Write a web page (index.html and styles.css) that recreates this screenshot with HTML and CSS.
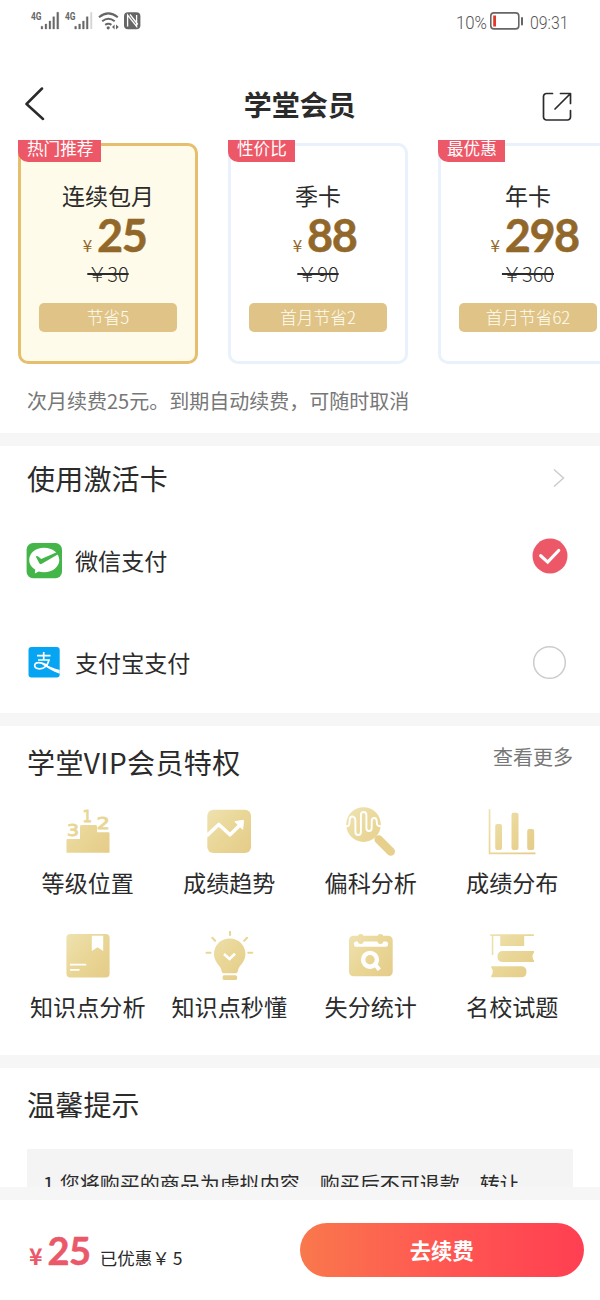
FILE: index.html
```html
<!DOCTYPE html>
<html lang="zh-CN">
<head>
<meta charset="utf-8">
<title>学堂会员</title>
<link rel="stylesheet" href="styles.css">
</head>
<body>
<div class="page">
  <div class="status">
    <svg class="status-left" width="114" height="24" viewBox="0 0 114 24" fill="#666">
      <text x="1" y="12" class="net" textLength="10.5" lengthAdjust="spacingAndGlyphs">4G</text>
      <path d="M11 18.3h1.8V21H11zM15 16h1.800v5H15zM19 13h1.800v8H19zM22.800 8.700h1.800V21h-1.800zM26.800 4.300h1.900V21h-1.900z" stroke="#666" stroke-width=".3"/>
      <text x="35" y="12" class="net" textLength="10.5" lengthAdjust="spacingAndGlyphs">4G</text>
      <path d="M44.700 18.300h1.800V21h-1.800zM48.700 16h1.800v5h-1.800zM52.500 13h1.800v8h-1.800zM56.300 8.700h1.800V21h-1.800z" stroke="#666" stroke-width=".3"/>
      <path d="M60.300 4.300h1.900V21h-1.900z" fill="#d4d4d4"/>
      <g fill="none" stroke="#666" stroke-width="2">
        <path d="M69 9.2q9.3-7.6 18.8 0M72.2 13.2q6.2-5 12.5 0M75.2 16.9q3.2-2.3 6.2 0"/>
      </g>
      <circle cx="78.2" cy="19.8" r="1.6"/>
      <path d="M84.6 16.5v5L82 19zM86 16.5v5l2.8-2.5z"/>
      <rect x="94" y="4.2" width="16.4" height="17" rx="4"/>
      <path d="M97.6 18.5V7l9 11.3V7M100 6.5l7.8 10" fill="none" stroke="#fff" stroke-width="1.3"/>
    </svg>
    <svg class="status-right" width="116" height="24" viewBox="0 0 116 24" fill="#666">
      <text x="1" y="20.6" class="clock" textLength="31" lengthAdjust="spacingAndGlyphs">10%</text>
      <rect x="35.8" y="4.9" width="28" height="16" rx="3.2" fill="none" stroke="#666" stroke-width="1.6"/>
      <rect x="38.2" y="7.5" width="2.8" height="11" fill="#e03a2a"/>
      <rect x="66" y="9" width="2" height="8.5" rx="1"/>
      <text x="75" y="20.6" class="clock" textLength="38.5" lengthAdjust="spacingAndGlyphs">09:31</text>
    </svg>
  </div>

  <header class="nav">
    <svg width="22" height="36" viewBox="0 0 22 36" fill="none" stroke="#2b2b2b" stroke-width="2.5" stroke-linecap="round" stroke-linejoin="round"><path d="M17 2.500 1.500 18l16.500 15"/></svg>
    <h1>学堂会员</h1>
    <svg width="30" height="30" viewBox="0 0 30 30" fill="none" stroke="#2b2b2b" stroke-width="1.7" stroke-linecap="round" stroke-linejoin="round"><path d="M10.500 1.500H4.500a3 3 0 0 0-3 3V25a3 3 0 0 0 3 3H25.500a3 3 0 0 0 3-3V18.500M18.500 1.500H28.500V11.500M28 2 13 17"/></svg>
  </header>

  <main class="content">
    <section class="plans">
      <div class="plan active">
        <span class="tag">热门推荐</span>
        <div class="plan-name">连续包月</div>
        <div class="price"><i>¥</i><b>25</b></div>
        <div class="was">￥30</div>
        <div class="save">节省5</div>
      </div>
      <div class="plan">
        <span class="tag">性价比</span>
        <div class="plan-name">季卡</div>
        <div class="price"><i>¥</i><b>88</b></div>
        <div class="was">￥90</div>
        <div class="save">首月节省2</div>
      </div>
      <div class="plan">
        <span class="tag">最优惠</span>
        <div class="plan-name">年卡</div>
        <div class="price"><i>¥</i><b>298</b></div>
        <div class="was">￥360</div>
        <div class="save">首月节省62</div>
      </div>
    </section>
    <p class="note">次月续费25元。到期自动续费，可随时取消</p>

    <section class="pay">
      <div class="activate">
        <h2>使用激活卡</h2>
        <svg width="12" height="20" viewBox="0 0 12 20" fill="none" stroke="#ccc" stroke-width="1.5"><path d="M1 1.500 10.500 10 1 18.500"/></svg>
      </div>
      <div class="method wechat">
        <svg width="36" height="36" viewBox="0 0 36 36">
          <rect x=".6" width="35.400" height="35.200" rx="6.500" fill="#43b549"/>
          <path d="M18 4.800c8.700 0 15.300 5.400 15.300 12.200S26.700 29.200 18 29.200c-1.900 0-3.600-.3-5.200-.8L8.800 30.600l.5-3.900C5.400 24.500 3.200 21 3.200 17 3.200 10.200 9.500 4.800 18 4.800z" fill="#fff"/>
          <path d="M9.800 13.500q1.200-1 2.400 0l3 2.400 17.200-7.300 1 2-17.600 10.200q-1.800 1-2.600-.8z" fill="#43b549"/>
        </svg>
        <span>微信支付</span>
        <svg class="radio" width="36" height="36" viewBox="0 0 36 36"><circle cx="18" cy="18" r="17.500" fill="#ed5868"/><path d="m8.700 17.700 7 6.400 11-11.600" fill="none" stroke="#fff" stroke-width="3.200" stroke-linecap="round"/></svg>
      </div>
      <div class="method alipay">
        <svg width="36" height="32" viewBox="-2.500 0 36 32">
          <rect width="31.200" height="30.500" rx="3" fill="#06a5f3"/>
          <g fill="none" stroke="#fff" stroke-width="1.700">
            <path d="M8.500 8.600H22M15.200 5v8M9.500 13H20.500C19.300 18 15.800 21.800 11 21.800 7.500 21.800 6.200 20 6.200 18.600c0-2 1.800-3 4-3 3.300 0 6 1.500 9 3.200"/>
          </g>
          <path d="M14 16.200c5 2.200 10 4.700 17.200 6.800v3.800C24 24.500 19 20.500 14 17.800z" fill="#fff"/>
        </svg>
        <span>支付宝支付</span>
        <svg class="radio" width="36" height="36" viewBox="0 0 36 36"><circle cx="17.500" cy="17.500" r="15.800" fill="none" stroke="#ccc" stroke-width="1.500"/></svg>
      </div>
    </section>

    <section class="perks">
      <div class="perks-head"><h2>学堂VIP会员特权</h2><a>查看更多</a></div>
      <div class="grid">
        <div class="perk">
          <svg viewBox="0 0 50 50" fill="url(#gold)">
            <defs><linearGradient id="gold" gradientUnits="userSpaceOnUse" x1="2" y1="4" x2="48" y2="46"><stop offset="0" stop-color="#efe2b0"/><stop offset=".5" stop-color="#e9d696"/><stop offset="1" stop-color="#e5cb88"/></linearGradient></defs>
            <path d="M3.500 33q0-1 1-1H17V19.500q0-1.500 1.500-1.500h14q1.500 0 1.500 1.500v5.800H45.500q1 0 1 1V45.700H3.500z"/>
            <text x="4" y="28.900" class="rank" textLength="12" lengthAdjust="spacingAndGlyphs">3</text><text x="19.500" y="15.300" class="rank" textLength="9.500" lengthAdjust="spacingAndGlyphs">1</text><text x="33.800" y="22.200" class="rank" textLength="13" lengthAdjust="spacingAndGlyphs">2</text>
          </svg>
          <span>等级位置</span>
        </div>
        <div class="perk">
          <svg viewBox="0 0 50 50" fill="url(#gold)">
            <rect x="3.300" y="2.700" width="43.700" height="43.300" rx="6"/>
            <path d="m2.500 28.800 12.300-11.300L26 27.800 36 18" fill="none" stroke="#fff" stroke-width="3.600" stroke-linejoin="round"/>
            <path d="m30.800 14.600 8.700-1.300-.8 9z" fill="#fff" stroke="#fff" stroke-linejoin="round"/>
          </svg>
          <span>成绩趋势</span>
        </div>
        <div class="perk">
          <svg viewBox="0 0 50 50" fill="url(#gold)">
            <circle cx="17.500" cy="17.600" r="17.300"/>
            <path d="M0 19.300C3 19.300 3.600 18 3.600 14c0-6 5.800-6 5.800 0V25c0 4 5.500 4 5.500 0V8c0-4 5.500-4 5.500 0V21c0 4 5.300 4 5.300 0V14c0-4 5-4 5 0 0 4 .5 5.300 4.500 5.300" fill="none" stroke="#fff" stroke-width="1.900"/>
            <path d="m32.700 32.500 12 12" stroke="#e7d08c" stroke-width="8.500" stroke-linecap="round"/>
          </svg>
          <span>偏科分析</span>
        </div>
        <div class="perk">
          <svg viewBox="0 0 50 50" fill="url(#gold)">
            <path d="M1.700 2.300h1.700V45.500H48.500v1.700H1.700z"/>
            <rect x="8.200" y="17" width="6.800" height="26" rx="2"/><rect x="24.500" y="5.700" width="7" height="37.300" rx="2"/><rect x="40.200" y="22" width="7" height="21" rx="2"/>
          </svg>
          <span>成绩分布</span>
        </div>
        <div class="perk">
          <svg viewBox="0 0 50 50" fill="url(#gold)">
            <rect x="3.400" y="3" width="43.200" height="43.600" rx="4"/>
            <path d="M28.800 4.700h11.400V20l-5.700-3.800-5.700 3.800zM7 32.800H23.200v1.800H7zM7 37.900h9.500v1.800H7z" fill="#fff"/>
          </svg>
          <span>知识点分析</span>
        </div>
        <div class="perk">
          <svg viewBox="0 0 50 50" fill="url(#gold)">
            <path d="M25.700 7.600c-9 0-15.700 6.800-15.700 15.500 0 6 3.200 9.200 6 12.900 1.500 2 1.300 4 2 5.200q.5 1 1.700 1h12q1.200 0 1.700-1c.7-1.200.5-3.200 2-5.200 2.800-3.700 6-6.900 6-12.900 0-8.700-6.700-15.500-15.700-15.500z"/>
            <rect x="18.600" y="44.200" width="14.500" height="4.800" rx="1.600"/>
            <path d="M26 .8V4M2.500 21.700H6.500M44.300 21.700h4M8.300 6.800l2.800 3M43 6.800l-2.800 3" stroke="#e9d696" stroke-width="2" stroke-linecap="round"/>
            <path d="m20 23 5.500 5L31 22.700" fill="none" stroke="#fff" stroke-width="2.600"/>
          </svg>
          <span>知识点秒懂</span>
        </div>
        <div class="perk">
          <svg viewBox="0 0 50 50" fill="url(#gold)">
            <rect x="3" y="4.800" width="43.700" height="40.400" rx="4.500"/>
            <rect x="8" y="10.600" width="34" height="5.200" rx="2" fill="#fff"/>
            <rect x="11.800" y="3" width="5.800" height="10" rx="2.900"/><rect x="31.500" y="3" width="5.800" height="10" rx="2.900"/>
            <circle cx="24" cy="28.800" r="6.900" fill="none" stroke="#fff" stroke-width="4.400"/>
            <path d="m30 34.500 3.300 4.300" stroke="#fff" stroke-width="4" fill="none"/>
          </svg>
          <span>失分统计</span>
        </div>
        <div class="perk">
          <svg viewBox="0 0 50 50" fill="url(#gold)">
            <path d="M3.200 3.200H46.800V4.900H37.200V15h-24V4.900H6.300V24H4.800V4.900H3.200zM16 20H47v1.500q-3 4 0 8V31H16q-5.500 0-5.500-5.500T16 20zM4.200 35.300H34q5.500 0 5.500 5.500T34 46.300H4.200V45q3-4.500 0-8.500z"/>
          </svg>
          <span>名校试题</span>
        </div>
      </div>
    </section>

    <section class="tips">
      <h2>温馨提示</h2>
      <div class="tips-box">1.您将购买的商品为虚拟内容，购买后不可退款、转让</div>
    </section>
  </main>

  <footer class="checkout">
    <div class="total"><i>¥</i><b>25</b><span>已优惠￥<em>5</em></span></div>
    <button class="renew">去续费</button>
  </footer>
</div>
</body>
</html>
```
FILE: styles.css
```css
* { box-sizing: border-box; margin: 0; padding: 0; }
body {
  background: #fff;
  color: #2b2b2b;
  font-family: "Noto Sans CJK SC", sans-serif;
}
svg { display: block; flex: none; }
i, em { font-style: normal; }
.page { width: 600px; height: 1300px; display: flex; flex-direction: column; overflow: hidden; }

.status { height: 44px; flex: none; display: flex; justify-content: space-between; padding: 8px 29px 0 30px; }
.net { font: bold 10px Roboto, sans-serif; }
.clock { font: 300 19px Roboto, sans-serif; fill: #555; }

.nav { height: 96px; flex: none; display: flex; justify-content: space-between; align-items: flex-start; padding: 42px 27.5px 0 25px; }
.nav h1 { font-size: 28px; line-height: 40px; margin: -2px 0 0 10px; }
.nav svg:last-child { margin-top: 5.5px; }

.content { flex: 1; min-height: 0; overflow: hidden; }
.plans { display: flex; gap: 30px; padding: 3px 0 0 18px; height: 224px; }
.plan {
  position: relative;
  flex: none;
  width: 180px;
  height: 221px;
  border: 3px solid #e9f1fc;
  border-radius: 10px;
  padding: 33px 18px 0;
  text-align: center;
}
.plan.active { border-color: #e5be6e; background: #fffbea; }
.tag {
  position: absolute;
  left: -3px;
  top: -6px;
  height: 22px;
  padding: 0 8px 0 9px;
  border-radius: 0 0 0 10px;
  background: #ed5868;
  color: #fff;
  font-size: 16.6px;
  line-height: 17px;
}
.plan-name { font-size: 23px; line-height: 32px; }
.price { display: flex; justify-content: center; align-items: baseline; height: 46px; padding: 1px 0 0 13px; color: #92682a; }
.price i { font-size: 17px; margin-right: 5px; line-height: 24px; }
.price b { font: 700 45px/46px Lato, sans-serif; letter-spacing: -1.5px; -webkit-text-stroke: .5px #92682a; }
.was { font-size: 20px; font-weight: 300; line-height: 30px; margin-top: 2px; text-decoration: line-through; }
.save { height: 29px; margin: 14px 0 0; border-radius: 5px; background: #e0c487; color: #fffdf3; font-size: 16.7px; font-weight: 300; line-height: 29px; }
.note { height: 69px; padding-left: 27px; color: #777; font-size: 20px; line-height: 73px; }

.pay { border-top: 13px solid #f6f6f6; height: 280px; }
h2 { font-size: 28px; font-weight: 400; line-height: 40px; letter-spacing: .2px; }
.activate { display: flex; justify-content: space-between; align-items: center; padding: 12px 35px 0 27px; }
.method { display: flex; align-items: center; padding: 0 32px 0 26px; height: 36px; font-size: 23.1px; }
.method span { flex: 1; margin: -3px 0 0 13px; line-height: 34px; }
.wechat { margin-top: 45px; }
.wechat .radio { margin-top: -11px; }
.alipay { margin-top: 66px; }
.alipay .radio { margin-top: -1px; }

.perks { border-top: 13px solid #f6f6f6; height: 342px; }
.perks-head { display: flex; justify-content: space-between; padding: 15px 27px 0; }
.perks-head h2 { letter-spacing: .4px; padding-top: 1px; margin-bottom: -1px; }
.perks-head a { color: #777; font-size: 20px; line-height: 32px; }
.grid { display: grid; grid-template-columns: repeat(4, 1fr); grid-auto-rows: 124px; padding: 26px 17px 0; }
.perk { display: flex; flex-direction: column; align-items: center; }
.perk svg { width: 50px; height: 50px; }
.perk span { margin-top: 8px; font-size: 23.1px; line-height: 34px; white-space: nowrap; }
.rank { font: 15.5px "DejaVu Sans", sans-serif; fill: #e9d696; stroke: #e9d696; stroke-width: .9px; }

.tips { border-top: 13px solid #f6f6f6; padding: 16px 27px 0; }
.tips-box { margin-top: 25px; height: 80px; padding: 20px 17px 0 16px; background: #f4f4f4; font-size: 20px; line-height: 30px; white-space: nowrap; }

.checkout { height: 113px; flex: none; border-top: 13px solid #f6f6f6; background: #fff; display: flex; justify-content: space-between; padding: 23px 16.5px 0 29px; }
.total { display: flex; align-items: baseline; padding-top: 5px; height: 50px; color: #ea5869; }
.total i { font-size: 23px; font-weight: 700; line-height: 44px; }
.total b { font: 700 38px/44px Lato, sans-serif; margin-left: 5px; letter-spacing: -.5px; -webkit-text-stroke: .5px #ea5869; }
.total span { margin-left: 9px; font-size: 17.5px; color: #2b2b2b; }
.total em { margin-left: 3px; }
.renew { width: 283.5px; height: 54px; border: 0; border-radius: 27px; background: linear-gradient(90deg, #f9784c, #ff5752 50%, #ff3f52); color: #fff; font: 700 21.3px/54px "Noto Sans CJK SC", sans-serif; }
```
